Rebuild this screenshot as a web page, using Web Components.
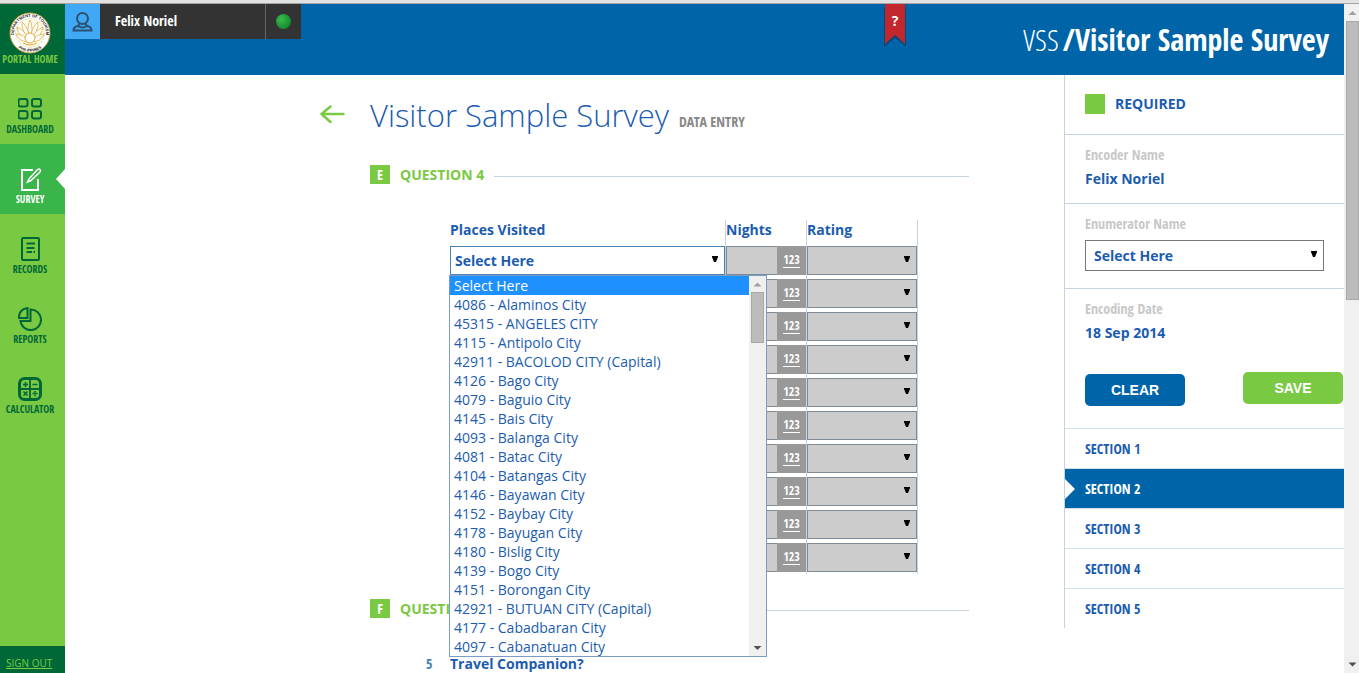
<!DOCTYPE html>
<html lang="en">
<head>
<meta charset="utf-8">
<title>Visitor Sample Survey</title>
<style>
:root{
  --cond:"Open Sans Condensed","Liberation Sans Narrow","Open Sans",sans-serif;
  --cond-light:"Open Sans Condensed Light","Open Sans Condensed","Open Sans",sans-serif;
  --blue:#0064a8;--ink:#1b5cb0;--lime:#7ac943;--forest:#006837;--line:#c3d3e2;
}
html,body{height:100%}
body{margin:0;overflow:hidden;background:#fff;color:var(--ink);font:14px/20px "Open Sans",sans-serif}
</style>
</head>
<body>
<app-shell>
  <nav-rail slot="rail"></nav-rail>
  <top-bar slot="top"></top-bar>
  <survey-page slot="main"></survey-page>
  <side-panel slot="side"></side-panel>
  <scroll-track slot="scroll" class="page"></scroll-track>
</app-shell>
<script>
const define = (name, html, setup) => {
  const tpl = document.createElement('template');
  tpl.innerHTML = html;
  customElements.define(name, class extends HTMLElement {
    constructor() {
      super();
      this.attachShadow({mode: 'open'}).append(tpl.content.cloneNode(true));
    }
    connectedCallback() { if (setup) setup(this, this.shadowRoot); }
  });
};

define('app-shell', `
<style>
:host{display:grid;height:100vh;grid-template:4px 71px minmax(0,1fr) / 65px minmax(0,1fr) 280px 15px}
.strip{grid-area:1/1/2/-1;background:#e2e2e2;border-bottom:1px solid #a5a5a5;box-sizing:border-box}
slot{display:grid;min-height:0;min-width:0}
.rail{grid-area:2/1/4/2}.top{grid-area:2/2/3/4}.main{grid-area:3/2}.side{grid-area:3/3}.scroll{grid-area:2/4/4/5}
</style>
<div class="strip"></div>
<slot class="rail" name="rail"></slot><slot class="top" name="top"></slot>
<slot class="main" name="main"></slot><slot class="side" name="side"></slot>
<slot class="scroll" name="scroll"></slot>`);

define('scroll-track', `
<style>
:host{display:flex;flex-direction:column;align-items:stretch;background:#f0f0f0;box-sizing:border-box;padding:0 2px}
:host(.page){padding:0 0 0 2px}
svg{display:block;align-self:center;flex:none}
.thumb{background:#bcbcbc;border:1px solid #a8a8a8;box-sizing:border-box;height:51px}
:host(.page) .thumb{height:279px}
:host(.page) svg{height:17px}
.rest{flex:1}
</style>
<svg width="11" height="16" viewBox="0 0 11 16"><path d="M1.500 10.500 5.500 6.500 9.500 10.500z" fill="#a0a0a0"/></svg>
<div class="thumb"></div><div class="rest"></div>
<svg width="11" height="16" viewBox="0 0 11 16"><path d="M1.500 6 5.500 10 9.500 6z" fill="#505050"/></svg>`);

define('nav-item', `
<style>
:host{display:block;height:70px;color:var(--forest);text-align:center}
a{display:flex;flex-direction:column;align-items:center;height:100%;box-sizing:border-box;padding:23px 5px 0 0;color:inherit;text-decoration:none;font:bold 10px/14px var(--cond);gap:1px;position:relative;white-space:nowrap}
slot[name=icon]{display:block;height:24px}
:host([current]){background:#39b54a;color:#fff}
:host([current]) a::after{content:"";position:absolute;right:0;top:25px;width:9px;height:20px;background:#fff;clip-path:polygon(100% 0,0 50%,100% 100%)}
</style>
<a href="#"><slot name="icon"></slot><span><slot></slot></span></a>`);

define('nav-rail', `
<style>
:host{display:flex;flex-direction:column;background:var(--lime)}
.home{display:flex;flex-direction:column;align-items:center;height:70px;box-sizing:border-box;padding:8px 5px 0 0;background:var(--forest);color:var(--lime);font:bold 10px/11px var(--cond);text-decoration:none;white-space:nowrap}
nav{flex:1}
.out{background:var(--forest);height:27px;color:var(--lime);font:10px/35px "Open Sans",sans-serif;padding-left:6px;overflow:hidden}
.out a{color:inherit}
nav svg{display:block;fill:none;stroke:currentColor;stroke-width:2}
.home svg{display:block;overflow:visible}
</style>
<a class="home" href="#">
<svg width="42" height="42" viewBox="0 0 42 42">
<defs><path id="up" d="M6 26.500A16 16 0 1 1 36 26.500"/><path id="dn" d="M2.300 21a18.700 18.700 0 0 0 37.400 0"/></defs>
<circle cx="21" cy="21" r="20" fill="#fff" stroke="#c9a24a" stroke-width="1"/>
<circle cx="21" cy="21" r="14.500" fill="#fffdf0" stroke="#e5d3a0" stroke-width=".6"/>
<g fill="#fff" stroke="#d9a530" stroke-width=".7">
<path d="M21 30Q17 15 21 8Q25 15 21 30z"/>
<path d="M21 30Q12 18 13 10Q20 15 21 30z"/><path d="M21 30Q30 18 29 10Q22 15 21 30z"/>
<path d="M20 30Q9 24 8 15Q16 18 21 30z"/><path d="M22 30Q33 24 34 15Q26 18 21 30z"/>
<path d="M20 30Q10 30 7 22Q15 22 21 30z"/><path d="M22 30Q32 30 35 22Q27 22 21 30z"/>
</g>
<circle cx="21" cy="26" r="5" fill="#fff" stroke="#e0a92c"/>
<path d="M14 31q7 4 14 0" stroke="#d9a530" fill="none"/>
<g fill="#222" font-family="Liberation Sans" font-weight="bold" font-size="4">
<text text-anchor="middle"><textPath href="#up" startOffset="50%">DEPARTMENT OF TOURISM</textPath></text>
<text text-anchor="middle"><textPath href="#dn" startOffset="50%">PHILIPPINES</textPath></text></g>
</svg>PORTAL HOME</a>
<nav>
<nav-item><svg slot="icon" width="24" height="24" viewBox="0 0 24 24"><rect x="0" y="2" width="9" height="7.500" rx="2" transform="translate(0.500)"/><rect x="14" y="2" width="9" height="7.500" rx="2"/><rect x="0.500" y="14" width="9" height="7.500" rx="2"/><rect x="14" y="14" width="9" height="7.500" rx="2"/></svg>DASHBOARD</nav-item>
<nav-item current><svg slot="icon" width="24" height="24" viewBox="0 0 24 24"><path d="M15 3H4v20h16V12"/><path d="M11 12 19.500 2.500q1.500-1 2.500 0t0 2.500L13 13.500 9.500 15z" stroke-width="1.500"/></svg>SURVEY</nav-item>
<nav-item><svg slot="icon" width="24" height="24" viewBox="0 0 24 24"><rect x="4" y="1" width="17" height="22" rx="1"/><path d="M8.500 6.500H17M8.500 11h8M8.500 15H14M15.500 15h1.500" stroke-width="1.800"/></svg>RECORDS</nav-item>
<nav-item><svg slot="icon" width="24" height="24" viewBox="0 0 24 24"><path d="M12.500 2.500a10.300 10.300 0 1 1-10 11.500H12.500z"/><path d="M9.500 1v10H.8Q1 2 9.500 1z"/></svg>REPORTS</nav-item>
<nav-item><svg slot="icon" width="24" height="24" viewBox="0 0 24 24"><rect x="1.500" y="1.500" width="21" height="21" rx="5" stroke-width="3"/><path d="M12 1v22M1 12h22" stroke-width="1.800"/><path d="M7.500 5v5M5 7.500h5M14.500 7.500h5M5.500 14.500l4 4M9.500 14.500l-4 4M14.500 16.500h5" stroke-width="1.600"/><path d="M17 14v1.500M17 17.800v1.500" stroke-width="1.600"/></svg>CALCULATOR</nav-item>
</nav>
<div class="out"><a href="#">SIGN OUT</a></div>`);

define('top-bar', `
<style>
:host{display:flex;justify-content:space-between;background:var(--blue);color:#fff;position:relative}
.user{display:flex;height:35px;width:236px}
.face{width:35px;background:#3fa9f5;display:grid;place-items:center}
.name{flex:1;background:#333;padding-left:15px;font:bold 14px/34px var(--cond);border-right:1px solid #666}
.state{width:35px;background:#333;display:grid;place-items:center}
.dot{width:15px;height:15px;border-radius:50%;background:radial-gradient(circle at 35% 35%,#3cba4a,#128a2c 75%)}
.flag{position:absolute;right:436px;top:0;width:26px;height:44px}
.flag a{position:absolute;inset:0;color:#fff;text-align:center;text-decoration:none;font:bold 14px/33px "Open Sans",sans-serif}
svg{display:block}
h1{display:flex;gap:4px;margin:0;padding:16px 15px 0 0;font:bold 30px/40px var(--cond);white-space:nowrap}
h1 span{font-family:var(--cond-light);font-weight:300}
</style>
<div class="user"><div class="face"><svg width="21" height="20" viewBox="0 0 21 20" fill="none" stroke="#2c5071" stroke-width="2"><circle cx="10.500" cy="6.500" r="5.500"/><path d="M7 11.500 6.500 14Q1.500 14.500 1.500 18.500H19.500Q19.500 14.500 14.500 14L14 11.500M6.500 14Q10.500 17 14.500 14"/></svg></div>
<div class="name">Felix Noriel</div><div class="state"><div class="dot"></div></div></div>
<div class="flag"><svg width="26" height="44" viewBox="0 0 26 44"><path d="M2 3V43L13 34 24 43V3z" fill="#064a7c"/><path d="M3 0V40L13 31 23 40V0z" fill="#c1272d"/></svg><a href="#">?</a></div>
<h1><span>VSS</span> /Visitor Sample Survey</h1>`);

define('drop-down', `
<style>
:host{display:grid;height:29px}
select,svg{grid-area:1/1}
select{appearance:none;width:100%;height:100%;box-sizing:border-box;margin:0;border:1px solid #7f8b96;border-radius:0;background:#ccc;color:var(--ink);font:bold 14px/20px "Open Sans",sans-serif;padding:0 4px;outline:0}
:host([open]) select{background:#fff;border-color:#4a7fb8}
:host([panel]) select{background:#fff;border-color:#777;padding:0 8px}
:host([panel]){height:31px}
svg{place-self:center end;margin:0 7px 2px 0;pointer-events:none}
</style>
<select></select><svg width="6" height="7" viewBox="0 0 6 7"><path d="M0 0H6V1L4 6H2L0 1z"/></svg>`,
(el, root) => {
  const s = root.querySelector('select');
  s.setAttribute('aria-label', el.getAttribute('label'));
  s.replaceChildren(new Option(el.getAttribute('value') || ''));
});

define('option-list', `
<style>
:host{display:grid;grid-template-columns:minmax(0,1fr) 17px;box-sizing:border-box;border:1px solid #7d9cc4;background:#fff}
ul{list-style:none;margin:0;padding:0}
li{font:14px/19px "Open Sans",sans-serif;height:19px;padding-left:4px;white-space:nowrap}
li[aria-selected=true]{background:#1e90ff;color:#fff}
</style>
<ul role="listbox" aria-label="Places Visited"></ul><scroll-track></scroll-track>`,
(el, root) => {
  root.querySelector('ul').innerHTML = ['Select Here','4086 - Alaminos City','45315 - ANGELES CITY','4115 - Antipolo City','42911 - BACOLOD CITY (Capital)','4126 - Bago City','4079 - Baguio City','4145 - Bais City','4093 - Balanga City','4081 - Batac City','4104 - Batangas City','4146 - Bayawan City','4152 - Baybay City','4178 - Bayugan City','4180 - Bislig City','4139 - Bogo City','4151 - Borongan City','42921 - BUTUAN CITY (Capital)','4177 - Cabadbaran City','4097 - Cabanatuan City']
    .map((t, i) => `<li role="option" aria-selected="${i === 0}">${t}</li>`).join('');
});

define('places-table', `
<style>
:host{display:block}
table{border-collapse:separate;border-spacing:0;table-layout:fixed;width:468px}
th{height:24px;padding:0;text-align:left;vertical-align:top;font:bold 14px/20px "Open Sans",sans-serif}
td{padding:2px 0}
th,td{border-right:1px solid var(--line)}
.cell{position:relative}
option-list{position:absolute;left:-1px;top:29px;width:318px;z-index:2}
.num{display:flex;height:29px}
input{flex:1;min-width:0;margin:0;border:1px solid #7f8b96;border-right:0;background:#ccc;box-sizing:border-box;font:14px/20px "Open Sans",sans-serif;color:var(--ink)}
.unit{width:29px;background:#999;display:grid;place-items:center}
.unit span{color:#fff;border-bottom:1px solid #fff;font:bold 12px/14px var(--cond)}
</style>
<table><colgroup><col style="width:276px"><col style="width:81px"><col></colgroup>
<thead><tr><th scope="col">Places Visited</th><th scope="col">Nights</th><th scope="col">Rating</th></tr></thead><tbody></tbody></table>`,
(el, root) => {
  root.querySelector('tbody').innerHTML = Array.from({length: 10}, (_, i) => `<tr>
<td><div class="cell"><drop-down label="Place ${i + 1}" ${i ? '' : 'open value="Select Here"'}></drop-down>${i ? '' : '<option-list></option-list>'}</div></td>
<td><div class="num"><input aria-label="Nights ${i + 1}"><div class="unit"><span>123</span></div></div></td>
<td><drop-down label="Rating ${i + 1}"></drop-down></td></tr>`).join('');
});

define('question-head', `
<style>
:host{display:flex;align-items:flex-start;height:20px;gap:10px;color:var(--lime);font:bold 14px/20px "Open Sans",sans-serif}
b{width:20px;height:19px;background:var(--lime);color:#fff;text-align:center;font:bold 14px/19px var(--cond)}
h3{margin:0;font:inherit}
i{flex:1;height:1px;background:var(--line);margin-top:11px}
</style>
<b><slot name="letter"></slot></b><h3><slot></slot></h3><i></i>`);

define('survey-page', `
<style>
:host{display:block;overflow:hidden;padding:0 95px 0 255px}
.title{display:flex;align-items:center;height:80px}
.back{width:50px}
.back svg{display:block}
h2{margin:0;font:300 31px/40px "Open Sans",sans-serif;white-space:nowrap}
small{margin:14px 0 0 10px;font:bold 14px/20px var(--cond);color:#888;white-space:nowrap}
section{margin-left:50px}
question-head{margin-top:10px}
places-table{margin:35px 0 0 80px}
.next{margin-top:25px}
.q{display:flex;padding-top:35px;font-weight:bold}
.q span{box-sizing:border-box;width:80px;padding-left:56px;font-family:var(--cond);color:#4583b5}
</style>
<div class="title"><a class="back" href="#" aria-label="Back"><svg width="26" height="20" viewBox="0 0 26 20" fill="none" stroke="#7ac943" stroke-width="2.500" stroke-linecap="round" stroke-linejoin="round"><path d="M23.500 9H1.500M10.500 1.500 1.500 9 10.500 17"/></svg></a>
<h2>Visitor Sample Survey</h2><small>DATA ENTRY</small></div>
<section><question-head><span slot="letter">E</span>QUESTION 4</question-head><places-table></places-table></section>
<section><question-head class="next"><span slot="letter">F</span>QUESTION 5</question-head><div class="q"><span>5</span>Travel Companion?</div></section>`);

define('side-panel', `
<style>
:host{display:block;align-self:start;border-left:1px solid var(--line);font-weight:bold;background:#fff}
.box{padding:10px 20px 14px;border-bottom:1px solid var(--line)}
.req{display:flex;align-items:center;gap:10px;height:58px;padding-top:0;padding-bottom:1px}
.req i{width:20px;height:20px;background:var(--lime)}
.cap{display:block;margin-bottom:4px;color:#c8c8c8;font:bold 14px/20px var(--cond)}
.enc{padding-bottom:17px}.enc .cap{margin-bottom:6px}
.date{border:0;padding-bottom:29px}
.btns{display:flex;justify-content:space-between;height:34px;padding:0 1px 22px 20px}
button{width:100px;height:32px;border:0;border-radius:5px;color:#fff;font:bold 14px/20px "Liberation Sans",sans-serif;background:var(--lime)}
.clear{background:var(--blue);align-self:flex-end}
nav a{display:block;height:39px;border-top:1px solid #d5dfe8;padding-left:20px;color:var(--ink);text-decoration:none;font:bold 14px/40px var(--cond);position:relative}
nav a.on{background:var(--blue);color:#fff}
nav a.on::before{content:"";position:absolute;left:0;top:10px;width:10px;height:20px;background:#fff;clip-path:polygon(0 0,100% 50%,0 100%)}
</style>
<div class="box req"><i></i>REQUIRED</div>
<div class="box"><span class="cap">Encoder Name</span>Felix Noriel</div>
<div class="box enc"><span class="cap">Enumerator Name</span><drop-down panel label="Enumerator Name" value="Select Here"></drop-down></div>
<div class="box date"><span class="cap">Encoding Date</span>18 Sep 2014</div>
<div class="btns"><button class="clear" type="button">CLEAR</button><button type="button">SAVE</button></div>
<nav><a href="#">SECTION 1</a><a class="on" href="#">SECTION 2</a><a href="#">SECTION 3</a><a href="#">SECTION 4</a><a href="#">SECTION 5</a></nav>`);
</script>
</body>
</html>
